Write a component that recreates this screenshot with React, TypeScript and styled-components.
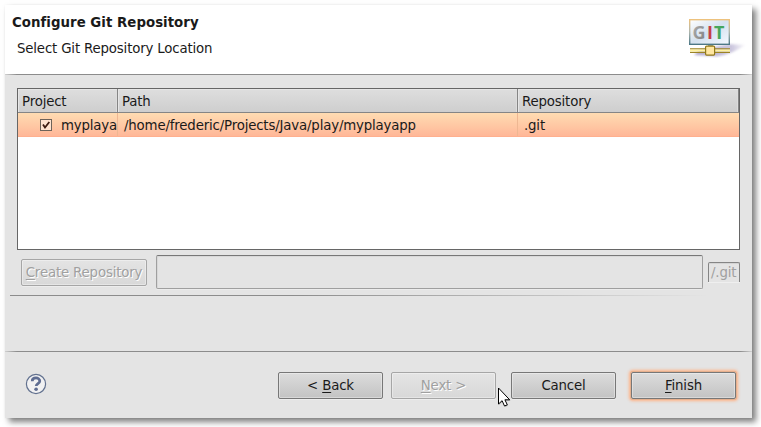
import React from "react";
import styled, { createGlobalStyle, css } from "styled-components";

const Page = createGlobalStyle`
  * { box-sizing: border-box; }
  html, body { margin: 0; background: #fff; overflow: hidden; }
  body { font: 13.33px/16px "DejaVu Sans", sans-serif; letter-spacing: -0.167px; color: #1a1a1a; }
`;

const Screen = styled.div`
  width: 761px;
  height: 427px;
  padding: 5px 9px 9px 5px;
  background: #fff;
`;

const Dialog = styled.main`
  position: relative;
  width: 747px;
  height: 413px;
  display: flex;
  flex-direction: column;
  background: #e4e4e4;
  box-shadow: 4px 4px 6px rgba(0, 0, 0, 0.5), 0 0 2px rgba(0, 0, 0, 0.05);
`;

const Header = styled.header`
  height: 69px;
  display: flex;
  justify-content: space-between;
  padding: 9px 5px 0 7px;
  background: #fff;
`;

const Title = styled.h1`
  margin: 1px 0 0;
  font-size: 13.33px;
  line-height: 16px;
  letter-spacing: 0.03px;
`;

const Subtitle = styled.p`
  margin: 10px 0 0 5px;
`;

const Rule = styled.div<{ $fade?: "right" | "ends" }>`
  flex: none;
  height: 1px;
  margin-left: ${(p) => (p.$fade === "right" ? "5px" : "0")};
  background: ${(p) =>
    p.$fade === "right"
      ? "linear-gradient(90deg, #8c8c8c 0 38%, #e4e4e4 94%)"
      : "linear-gradient(90deg, #d0d0d0, #8c8c8c 12px, #8c8c8c calc(100% - 12px), #d0d0d0)"};
`;

const Content = styled.section`
  height: 220px;
  flex: none;
  padding: 13px 12px 0;
`;

const Table = styled.div`
  height: 162px;
  border: 1px solid #666;
  background: #fff;
`;

const columns = css`
  display: grid;
  grid-template-columns: 100px 400px 1fr;
`;

const TableHead = styled.div`
  ${columns}
  height: 24px;
  background: linear-gradient(#dedede, #cecece);
  border-bottom: 1px solid #858585;
`;

const HeadCell = styled.div`
  padding: 5px 0 0 4px;
  border-right: 1px solid #858585;
  box-shadow: inset 1px 1px #e6e6e6, inset -1px 0 #dcdcdc;
`;

const TableRow = styled.div`
  ${columns}
  height: 24px;
  background: linear-gradient(#ffdcb2, #ffb798);
  border-bottom: 1px solid #ffb08f;
`;

const Cell = styled.div`
  display: flex;
  align-items: flex-start;
  overflow: hidden;
  white-space: nowrap;
  padding: 5px 0 0 6px;
  border-right: 1px solid #eeb792;
  &:first-child { padding-left: 22px; }
  &:last-child { border-right: 0; }
`;

const CheckIcon = styled.svg`
  flex: none;
  margin: 1px 9px 0 0;
`;

const Form = styled.div`
  display: flex;
  align-items: flex-start;
  padding: 5px 0 0 4px;
`;

const Button = styled.button<{ $focused?: boolean }>`
  width: 105px;
  height: 27px;
  flex: none;
  padding: 0;
  border: 1px solid #777;
  border-radius: 2px;
  background: linear-gradient(#dcdcdc, #c3c3c3);
  box-shadow: inset 0 0 0 1px rgba(255, 255, 255, 0.35)
    ${(p) => (p.$focused ? ", 0 0 0 1px #e6b08e, 0 0 3px 2px #ffb387" : ", 0 1px #ededed")};
  font: inherit;
  letter-spacing: inherit;
  color: #1a1a1a;
  white-space: nowrap;
  &:disabled {
    border-color: #a6a6a6;
    background: linear-gradient(#e4e4e4, #d8d8d8);
    color: #a0a0a0;
    text-shadow: 1px 1px #fff;
  }
`;

const CreateButton = styled(Button)`
  width: 126px;
  margin-top: 4px;
`;

const Mnemonic = styled.span`
  text-decoration: underline;
  text-decoration-thickness: 1px;
  text-underline-offset: 2px;
`;

const LocationInput = styled.input`
  width: 547px;
  height: 34px;
  margin-left: 9px;
  border: 1px solid #9f9f9f;
  border-top-color: #777;
  border-radius: 2px;
  background: #e4e4e4;
  box-shadow: inset 1px 1px #d8d8d8, 0 1px #ececec;
`;

const Suffix = styled.div`
  width: 32px;
  height: 20px;
  margin: 7px 0 0 5px;
  padding: 2px 0 0 2px;
  border: 1px solid #858585;
  border-bottom: 0;
  border-radius: 2px 2px 0 0;
  box-shadow: inset 0 1px #d4d4d4, 0 1px #efefef;
  color: #a0a0a0;
`;

const Message = styled.div`
  height: 55px;
  flex: none;
`;

const Footer = styled.footer`
  display: flex;
  align-items: flex-start;
  padding: 20px 16px 0 20px;
`;

const Help = styled.svg`
  margin: 1px auto 0 0;
`;

const ButtonPair = styled.div`
  display: flex;
  gap: 8px;
  margin-right: 15px;
`;

const ActionPair = styled.div`
  display: flex;
  gap: 15px;
`;

const Pointer = styled.svg`
  position: absolute;
  left: 492px;
  top: 382px;
`;

const GitLogo = () => (
  <svg width="62" height="46" viewBox="0 0 62 46">
    <defs>
      <linearGradient id="shade" x1="0" x2="1">
        <stop offset="0" stopColor="#8e83b4" stopOpacity=".7" />
        <stop offset=".75" stopColor="#aaa2c8" stopOpacity=".6" />
        <stop offset="1" stopColor="#d8d3e6" stopOpacity=".3" />
      </linearGradient>
      <linearGradient id="screen" x1="0" y1="0" x2="1" y2="1">
        <stop offset="0" stopColor="#fff" />
        <stop offset=".5" stopColor="#d4e1ef" />
        <stop offset="1" stopColor="#f4f9ff" />
      </linearGradient>
      <linearGradient id="letter" x1="0" y1="0" x2="1" y2="1">
        <stop offset="0" stopColor="#b4b4b4" />
        <stop offset="1" stopColor="#7c7c7c" />
      </linearGradient>
      <linearGradient id="frame" x1="0" y1="0" x2="0" y2="1">
        <stop offset="0" stopColor="#edc27d" />
        <stop offset=".5" stopColor="#aeb6af" />
        <stop offset="1" stopColor="#4d7886" />
      </linearGradient>
      <filter id="soft"><feGaussianBlur stdDeviation="0.8" /></filter>
    </defs>
    <path d="M9 41 L32 42.5 Q48 40 60 31 L44 30 L15 36Z" fill="url(#shade)" filter="url(#soft)" />
    <rect x="4.7" y="5.7" width="39.6" height="24.6" fill="url(#screen)" stroke="url(#frame)" strokeWidth="1.4" />
    <path d="M23 31h5v4h-5z" fill="#91a4a1" />
    <path d="M5 34.8h40M5 38.3h40" stroke="#9c8424" strokeWidth="1.2" />
    <path d="M5 36.5h40" stroke="#fff29f" strokeWidth="2.2" />
    <rect x="20.6" y="32.1" width="9" height="9" rx="1" fill="#ffe6a1" stroke="#927919" strokeWidth="1.2" />
    <g fontFamily="Open Sans, sans-serif" fontSize="18" fontWeight="700" letterSpacing="0">
      <text x="7.5" y="25" fill="url(#letter)">G</text>
      <text x="22" y="25" fill="#c53d49">I</text>
      <text x="29" y="25" fill="#46a65c">T</text>
    </g>
  </svg>
);

export default function App() {
  return (
    <>
      <Page />
      <Screen>
        <Dialog>
          <Header>
            <div>
              <Title>Configure Git Repository</Title>
              <Subtitle>Select Git Repository Location</Subtitle>
            </div>
            <GitLogo />
          </Header>
          <Rule $fade="ends" />
          <Content>
            <Table>
              <TableHead>
                <HeadCell>Project</HeadCell>
                <HeadCell>Path</HeadCell>
                <HeadCell>Repository</HeadCell>
              </TableHead>
              <TableRow>
                <Cell>
                  <CheckIcon width="12" height="12" viewBox="0 0 12 12">
                    <rect x=".5" y=".5" width="11" height="11" fill="#ffe3d0" stroke="#6e6359" />
                    <path d="M3 5.5 5 8.5 9.3 3" fill="none" stroke="#3d1c12" strokeWidth="1.8" />
                  </CheckIcon>
                  myplaya
                </Cell>
                <Cell>/home/frederic/Projects/Java/play/myplayapp</Cell>
                <Cell>.git</Cell>
              </TableRow>
            </Table>
            <Form>
              <CreateButton disabled><Mnemonic>C</Mnemonic>reate Repository</CreateButton>
              <LocationInput disabled />
              <Suffix>/.git</Suffix>
            </Form>
          </Content>
          <Rule $fade="right" />
          <Message />
          <Rule $fade="ends" />
          <Footer>
            <Help width="22" height="22" viewBox="0 0 22 22">
              <circle cx="11" cy="11" r="9.6" fill="#f1f1f2" stroke="#62718f" strokeWidth="1.2" />
              <path d="M7.2 8.2C7.2 3.8 14.8 4 14.8 8c0 2.6-3.6 2.7-3.6 5" fill="none" stroke="#5f6d92" strokeWidth="2.7" />
              <circle cx="11.1" cy="16.2" r="1.8" fill="#5f6d92" />
            </Help>
            <ButtonPair>
              <Button>&lt; <Mnemonic>B</Mnemonic>ack</Button>
              <Button disabled><Mnemonic>N</Mnemonic>ext &gt;</Button>
            </ButtonPair>
            <ActionPair>
              <Button>Cancel</Button>
              <Button $focused><Mnemonic>F</Mnemonic>inish</Button>
            </ActionPair>
          </Footer>
          <Pointer width="16" height="22" viewBox="0 0 16 22">
            <path d="M2 2v16l3.5-3.2L8 20l3-1.3-2.4-5h5Z" fill="#888" opacity=".55" />
            <path d="M1.5 1v16l3.6-3.3L7.5 19l2.8-1.2-2.4-5H12.7Z" fill="#fff" stroke="#000" />
          </Pointer>
        </Dialog>
      </Screen>
    </>
  );
}
